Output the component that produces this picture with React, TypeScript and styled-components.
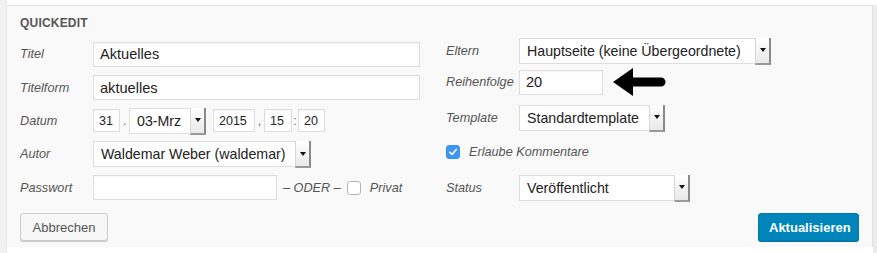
import React from 'react';
import styled, { createGlobalStyle } from 'styled-components';

const GlobalStyle = createGlobalStyle`
  html, body {
    margin: 0;
    padding: 0;
    background: #fff;
    font-family: 'Liberation Sans', Arial, sans-serif;
  }
`;

const Frame = styled.div`
  display: flex;
  width: 877px;
  height: 253px;
  background: #fff;
`;

const LeftStrip = styled.div`
  width: 7px;
  background: #f1f1f1;
  border-right: 1px solid #e8e8e8;
  box-sizing: border-box;
`;

const RightStrip = styled.div`
  width: 4px;
  margin-top: 5px;
  background: #ececec;
`;

const Panel = styled.div`
  width: 866px;
  height: 242px;
  margin-top: 5px;
  box-sizing: border-box;
  background: #f9f9f9;
  border-top: 1px solid #e1e1e1;
  border-right: 1px solid #e1e1e1;
  padding: 0 0 0 13px;
  display: flex;
  flex-direction: column;
`;

const Heading = styled.div`
  height: 30px;
  display: flex;
  align-items: center;
  padding-top: 3px;
  box-sizing: border-box;
  font-size: 12px;
  font-weight: 700;
  letter-spacing: 0.2px;
  color: #555;
`;

const Columns = styled.div`
  display: flex;
  height: 175px;
`;

const Column = styled.div<{ $width: number; $top: number }>`
  width: ${({ $width }) => $width}px;
  padding-top: ${({ $top }) => $top}px;
  display: flex;
  flex-direction: column;
`;

const Row = styled.div<{ $h: number }>`
  height: ${({ $h }) => $h}px;
  display: flex;
  align-items: center;
`;

const Label = styled.span`
  width: 73px;
  flex-shrink: 0;
  font-size: 12.7px;
  font-style: italic;
  color: #555;
`;

const TextBox = styled.div<{ $w: number; $small?: boolean }>`
  width: ${({ $w }) => $w}px;
  height: ${({ $small }) => ($small ? 23 : 25)}px;
  box-sizing: border-box;
  background: #fff;
  border: 1px solid #ddd;
  box-shadow: inset 0 1px 2px rgba(0, 0, 0, 0.04);
  display: flex;
  align-items: center;
  padding: 0 ${({ $small }) => ($small ? 5 : 6)}px;
  font-size: ${({ $small }) => ($small ? 12.5 : 14.6)}px;
  color: #222;
`;

const SelectBox = styled.div<{ $w: number }>`
  width: ${({ $w }) => $w}px;
  height: 26px;
  box-sizing: border-box;
  background: #fff;
  border: 1px solid #ddd;
  display: flex;
  align-items: stretch;
  font-size: 14.2px;
  color: #222;
`;

const SelectValue = styled.span`
  flex: 1;
  display: flex;
  align-items: center;
  padding-left: 7px;
  white-space: nowrap;
  overflow: hidden;
`;

const SelectButton = styled.span`
  width: 13px;
  flex-shrink: 0;
  background: linear-gradient(#ffffff, #e9e9e9);
  border-left: 1px solid #d6d6d6;
  border-right: 2px solid #8a8a8a;
  border-bottom: 2px solid #9a9a9a;
  margin: -1px -1px -2px 0;
  display: flex;
  align-items: center;
  justify-content: center;
  &::after {
    content: '';
    border-left: 3px solid transparent;
    border-right: 3px solid transparent;
    border-top: 4px solid #111;
  }
`;

const Sep = styled.span<{ $w: number }>`
  width: ${({ $w }) => $w}px;
  text-align: center;
  font-size: 13px;
  color: #777;
`;

const Oder = styled.span`
  margin: 0 6px 0 6px;
  font-size: 12.7px;
  font-style: italic;
  color: #555;
`;

const Check = styled.span<{ $on?: boolean }>`
  width: 14px;
  height: 14px;
  box-sizing: border-box;
  border-radius: 3px;
  border: 1px solid ${({ $on }) => ($on ? '#3b8ff0' : '#b4b4b4')};
  background: ${({ $on }) => ($on ? '#3d95f5' : '#fff')};
  display: inline-flex;
  align-items: center;
  justify-content: center;
  flex-shrink: 0;
`;

const CheckText = styled.span`
  margin-left: 9px;
  font-size: 12.7px;
  font-style: italic;
  color: #555;
`;

const Footer = styled.div`
  display: flex;
  justify-content: space-between;
  align-items: center;
  padding: 2px 13px 0 0;
  height: 28px;
`;

const Button = styled.button<{ $primary?: boolean }>`
  height: 28px;
  box-sizing: border-box;
  padding: 0 10px;
  border-radius: 3px;
  font-family: inherit;
  font-size: 13px;
  font-weight: ${({ $primary }) => ($primary ? 600 : 400)};
  color: ${({ $primary }) => ($primary ? '#fff' : '#555')};
  background: ${({ $primary }) => ($primary ? '#0085ba' : '#f7f7f7')};
  border: 1px solid ${({ $primary }) => ($primary ? '#0079ae' : '#ccc')};
  box-shadow: ${({ $primary }) => ($primary ? '0 1px 0 #0073aa' : '0 1px 0 #ccc')};
  width: ${({ $primary }) => ($primary ? 101 : 88)}px;
`;

const Arrow = () => (
  <svg width="54" height="28" viewBox="0 0 54 28" style={{ marginLeft: 10 }}>
    <path d="M0 14 L20 0 L20 9.5 L48 9.5 A4.5 4.5 0 0 1 48 18.5 L20 18.5 L20 28 Z" fill="#000" />
  </svg>
);

const Tick = () => (
  <svg width="10" height="10" viewBox="0 0 10 10">
    <path d="M1.8 5.2 L4 7.4 L8.3 2.4" fill="none" stroke="#fff" strokeWidth="1.6" strokeLinecap="round" strokeLinejoin="round" />
  </svg>
);

const Select: React.FC<{ w: number; value: string }> = ({ w, value }) => (
  <SelectBox $w={w}>
    <SelectValue>{value}</SelectValue>
    <SelectButton />
  </SelectBox>
);

const App: React.FC = () => (
  <>
    <GlobalStyle />
    <Frame>
      <LeftStrip />
      <Panel>
        <Heading>QUICKEDIT</Heading>
        <Columns>
          <Column $width={426} $top={1}>
            <Row $h={34}>
              <Label>Titel</Label>
              <TextBox $w={327}>Aktuelles</TextBox>
            </Row>
            <Row $h={33}>
              <Label>Titelform</Label>
              <TextBox $w={327}>aktuelles</TextBox>
            </Row>
            <Row $h={33}>
              <Label>Datum</Label>
              <TextBox $w={27} $small>31</TextBox>
              <Sep $w={9}>.</Sep>
              <Select w={77} value="03-Mrz" />
              <Sep $w={7} />
              <TextBox $w={42} $small>2015</TextBox>
              <Sep $w={9}>,</Sep>
              <TextBox $w={28} $small>15</TextBox>
              <Sep $w={6}>:</Sep>
              <TextBox $w={27} $small>20</TextBox>
            </Row>
            <Row $h={34}>
              <Label>Autor</Label>
              <Select w={218} value="Waldemar Weber (waldemar)" />
            </Row>
            <Row $h={33}>
              <Label>Passwort</Label>
              <TextBox $w={184} />
              <Oder>– ODER –</Oder>
              <Check />
              <CheckText>Privat</CheckText>
            </Row>
          </Column>
          <Column $width={400} $top={0}>
            <Row $h={29}>
              <Label>Eltern</Label>
              <Select w={252} value="Hauptseite (keine Übergeordnete)" />
            </Row>
            <Row $h={34}>
              <Label>Reihenfolge</Label>
              <TextBox $w={84}>20</TextBox>
              <Arrow />
            </Row>
            <Row $h={37}>
              <Label>Template</Label>
              <Select w={146} value="Standardtemplate" />
            </Row>
            <Row $h={32}>
              <Check $on>
                <Tick />
              </Check>
              <CheckText>Erlaube Kommentare</CheckText>
            </Row>
            <Row $h={39}>
              <Label>Status</Label>
              <Select w={171} value="Veröffentlicht" />
            </Row>
          </Column>
        </Columns>
        <Footer>
          <Button>Abbrechen</Button>
          <Button $primary>Aktualisieren</Button>
        </Footer>
      </Panel>
      <RightStrip />
    </Frame>
  </>
);

export default App;
